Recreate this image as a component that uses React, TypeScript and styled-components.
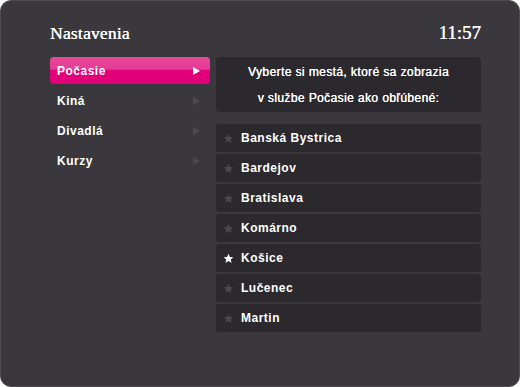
import styled, { createGlobalStyle } from 'styled-components';

const GlobalStyle = createGlobalStyle`
  html, body {
    margin: 0;
    padding: 0;
    background: #ffffff;
  }
`;

const Screen = styled.div`
  width: 520px;
  height: 387px;
  box-sizing: border-box;
  background: #3a383d;
  border: 1px solid #4d4b50;
  border-radius: 11px;
  padding: 20px 38px 0 49px;
  font-family: 'Liberation Sans', Arial, sans-serif;
  color: #ffffff;
`;

const Header = styled.div`
  display: flex;
  justify-content: space-between;
  align-items: flex-end;
  height: 24px;
  margin-bottom: 12px;
`;

const Title = styled.div`
  font-family: 'Liberation Serif', 'Times New Roman', serif;
  font-size: 17.5px;
  line-height: 24px;
  letter-spacing: 0.2px;
  text-shadow: 0.3px 0 0 #ffffff;
`;

const Clock = styled.div`
  font-family: 'Liberation Serif', 'Times New Roman', serif;
  font-size: 19px;
  line-height: 24px;
  text-shadow: 0.3px 0 0 #ffffff;
`;

const Columns = styled.div`
  display: flex;
  gap: 6px;
`;

const Menu = styled.div`
  width: 160px;
  display: flex;
  flex-direction: column;
  gap: 3px;
`;

const MenuItem = styled.div<{ $active?: boolean }>`
  height: 27px;
  display: flex;
  align-items: center;
  justify-content: space-between;
  padding: 0 10px 0 7px;
  border-radius: 4px;
  font-size: 12px;
  font-weight: bold;
  letter-spacing: 0.5px;
  background: ${(p) =>
    p.$active
      ? 'linear-gradient(to bottom, #e8489c 0%, #e53a94 45%, #e2007a 50%, #e2007a 100%)'
      : 'transparent'};
`;

const Arrow = styled.span<{ $active?: boolean }>`
  width: 0;
  height: 0;
  border-top: 4.5px solid transparent;
  border-bottom: 4.5px solid transparent;
  border-left: 7px solid ${(p) => (p.$active ? '#ffffff' : '#4b494e')};
`;

const Right = styled.div`
  width: 265px;
  display: flex;
  flex-direction: column;
`;

const Info = styled.div`
  height: 55px;
  box-sizing: border-box;
  background: #2b292d;
  border-radius: 4px;
  display: flex;
  flex-direction: column;
  align-items: center;
  justify-content: center;
  font-size: 12px;
  line-height: 26px;
  letter-spacing: 0.4px;
  text-shadow: 0.25px 0 0 #ffffff;
  margin-bottom: 12px;
`;

const List = styled.div`
  display: flex;
  flex-direction: column;
  gap: 2px;
`;

const City = styled.div<{ $on?: boolean }>`
  height: 28px;
  display: flex;
  align-items: center;
  gap: 7px;
  padding-left: 7px;
  background: #2b292d;
  border-radius: 3px;
  font-size: 12px;
  font-weight: bold;
  letter-spacing: 0.5px;
`;

const StarIcon = ({ on }: { on?: boolean }) => (
  <svg width="11" height="11" viewBox="0 0 24 24">
    <path
      d="M12 1.5l3.1 7.1 7.6.6-5.8 5 1.8 7.5L12 17.7l-6.7 4 1.8-7.5-5.8-5 7.6-.6z"
      fill={on ? '#ffffff' : '#4a484d'}
    />
  </svg>
);

const menu = ['Počasie', 'Kiná', 'Divadlá', 'Kurzy'];
const cities = [
  'Banská Bystrica',
  'Bardejov',
  'Bratislava',
  'Komárno',
  'Košice',
  'Lučenec',
  'Martin',
];

export default function App() {
  return (
    <>
      <GlobalStyle />
      <Screen>
        <Header>
          <Title>Nastavenia</Title>
          <Clock>11:57</Clock>
        </Header>
        <Columns>
          <Menu>
            {menu.map((m, i) => (
              <MenuItem key={m} $active={i === 0}>
                {m}
                <Arrow $active={i === 0} />
              </MenuItem>
            ))}
          </Menu>
          <Right>
            <Info>
              <div>Vyberte si mestá, ktoré sa zobrazia</div>
              <div>v službe Počasie ako obľúbené:</div>
            </Info>
            <List>
              {cities.map((c) => (
                <City key={c} $on={c === 'Košice'}>
                  <StarIcon on={c === 'Košice'} />
                  {c}
                </City>
              ))}
            </List>
          </Right>
        </Columns>
      </Screen>
    </>
  );
}
